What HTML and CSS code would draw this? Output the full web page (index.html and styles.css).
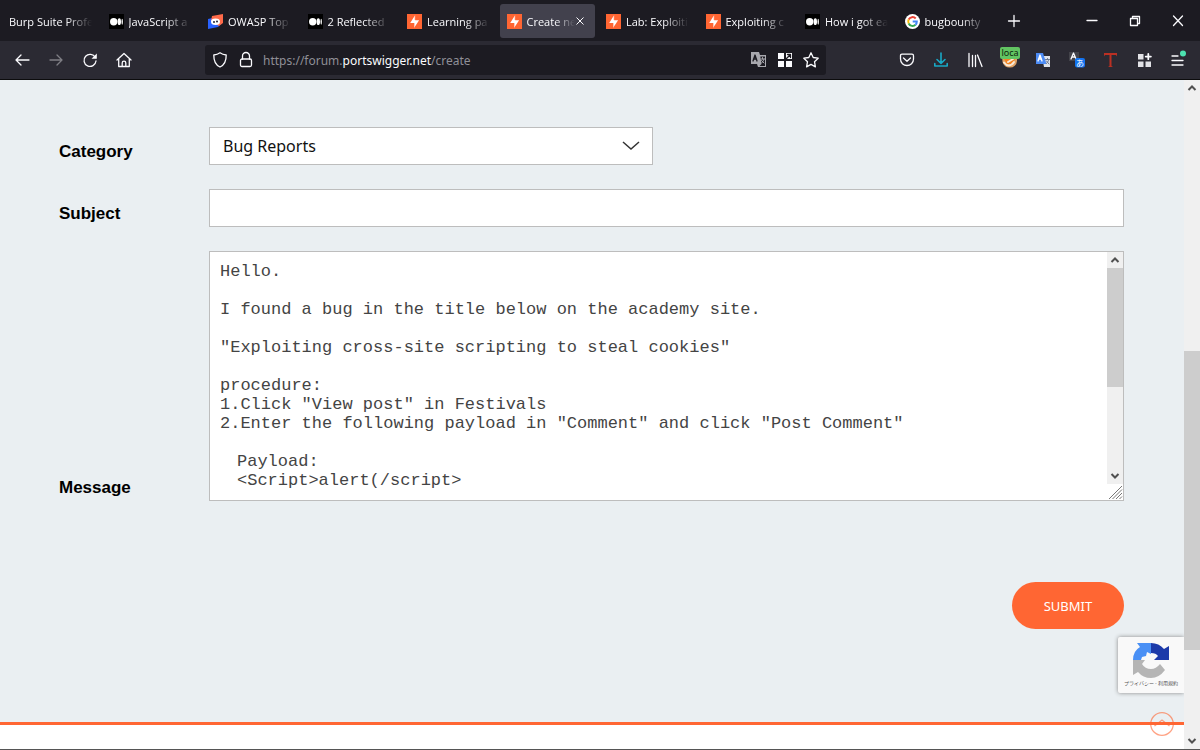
FILE: index.html
```html
<!DOCTYPE html>
<html lang="en">
<head>
<meta charset="utf-8">
<title>Create new post</title>
<link rel="stylesheet" href="styles.css">
</head>
<body>
<svg class="defs" aria-hidden="true">
  <symbol id="burp" viewBox="0 0 15 15"><path fill="#ff6633" d="M0 0h15v15H0z"/><path fill="#fff" d="M8.200 1v5.200h3.900L7 14V8.900H3.200z"/><path stroke="#ff6633" stroke-width=".7" d="M8.200 1v5M7 9v5"/></symbol>
  <symbol id="medium" viewBox="0 0 15 15"><path d="M0 0h15v15H0z"/><circle cx="4.700" cy="7.700" r="3.700" fill="#fff"/><ellipse cx="10.300" cy="7.700" rx="1.700" ry="3.400" fill="#fff"/><ellipse cx="13.200" cy="7.700" rx=".7" ry="3" fill="#fff"/></symbol>
  <symbol id="up" viewBox="0 0 16 16"><path fill="none" stroke="#505050" stroke-width="2" d="M4.500 10 8 6.500 11.500 10"/></symbol>
  <symbol id="down" viewBox="0 0 16 16"><path fill="none" stroke="#505050" stroke-width="2" d="M4.500 6 8 9.500 11.500 6"/></symbol>
</svg>

<header class="tabbar">
  <nav class="tabs">
    <button class="tab"><span class="tab-text">Burp Suite Profe</span></button>
    <button class="tab"><svg class="fav"><use href="#medium"/></svg><span class="tab-text">JavaScript a</span></button>
    <button class="tab"><svg class="fav" viewBox="0 0 15 15"><path fill="#2962ff" d="M0 5 9 3l4 7-3 3-10 2z"/><path fill="#ff6b4a" d="M4 2 15 0v9l-4 3-8-5z"/><ellipse cx="7.500" cy="7.800" rx="4.500" ry="3.300" fill="#fff"/><circle cx="6" cy="8" r="1" fill="#223"/><circle cx="9" cy="7.500" r="1" fill="#223"/></svg><span class="tab-text">OWASP Top</span></button>
    <button class="tab"><svg class="fav"><use href="#medium"/></svg><span class="tab-text">2 Reflected</span></button>
    <button class="tab"><svg class="fav"><use href="#burp"/></svg><span class="tab-text">Learning pa</span></button>
    <button class="tab active"><svg class="fav"><use href="#burp"/></svg><span class="tab-text">Create ne</span><svg class="close" viewBox="0 0 8 8"><path d="m.5.5 7 7m0-7-7 7"/></svg></button>
    <button class="tab"><svg class="fav"><use href="#burp"/></svg><span class="tab-text">Lab: Exploiti</span></button>
    <button class="tab"><svg class="fav"><use href="#burp"/></svg><span class="tab-text">Exploiting c</span></button>
    <button class="tab"><svg class="fav"><use href="#medium"/></svg><span class="tab-text">How i got ea</span></button>
    <button class="tab"><svg class="fav" viewBox="0 0 15 15"><circle cx="7.500" cy="7.500" r="7.500" fill="#fff"/><g fill="none" stroke-width="2"><path stroke="#ea4335" d="M3.700 5.500A4.300 4.300 0 0 1 10.700 4.500"/><path stroke="#fbbc05" d="M3.700 5.500a4.300 4.300 0 0 0 0 4"/><path stroke="#34a853" d="M3.700 9.500a4.300 4.300 0 0 0 6.800 1.300"/><path stroke="#4285f4" d="M10.500 10.800a4.300 4.300 0 0 0 1.300-3.200H7.700"/></g></svg><span class="tab-text">bugbounty</span></button>
  </nav>
  <button class="ib new" aria-label="New tab"><svg viewBox="0 0 18 18"><path d="M9 3.500v11M3.500 9h11"/></svg></button>
  <div class="window">
    <button class="ib" aria-label="Minimize"><svg viewBox="0 0 18 18"><path d="M4 8.500h10"/></svg></button>
    <button class="ib" aria-label="Restore"><svg viewBox="0 0 18 18"><path d="M4.500 6.500h7v7h-7zM6.500 6V4.500h7v7H12"/></svg></button>
    <button class="ib" aria-label="Close"><svg viewBox="0 0 18 18"><path d="m4.500 4 9 9.500m0-9.500-9 9.500"/></svg></button>
  </div>
</header>

<div class="toolbar">
  <div class="group">
    <button class="ib" aria-label="Back"><svg viewBox="0 0 18 18"><path d="M16 9H3m5-5L3 9l5 5"/></svg></button>
    <button class="ib dim" aria-label="Forward"><svg viewBox="0 0 18 18"><path d="M3 9h12m-5-5 5 5-5 5"/></svg></button>
    <button class="ib" aria-label="Reload"><svg viewBox="0 0 18 18"><path d="M14.300 6.500A6 6 0 1 0 15 10"/><path fill="#fbfbfe" stroke="none" d="M15.800 2.500v5.300h-5.300z"/></svg></button>
    <button class="ib" aria-label="Home"><svg viewBox="0 0 18 18"><path d="m2 9 7-6.500L16 9M3.700 8v7.500h10.600V8M7.200 15v-3a1.800 1.800 0 0 1 3.600 0v3"/></svg></button>
  </div>
  <div class="urlbar">
    <svg class="i" viewBox="0 0 18 18"><path d="M9 1.800c2 1.500 4 2 6.200 2.200C15.300 9.500 13.500 14 9 16 4.500 14 2.700 9.500 2.800 4 5 3.800 7 3.300 9 1.800z"/></svg>
    <svg class="i" viewBox="0 0 18 18"><rect x="3.500" y="8" width="11" height="7.500" rx="1.500"/><path d="M5.500 8V5a3.500 3.500 0 0 1 7 0v3"/></svg>
    <div class="url">https://forum.<b>portswigger.net</b>/create</div>
    <svg class="i" viewBox="0 0 18 18"><path fill="#a8a8ae" stroke="none" d="M1 1h8l1 3h6v12H8l-1-3H1z"/><path fill="#1c1b22" stroke="none" d="M10.300 5.500h4.700V15H9.500l2-2z"/><path stroke="#1c1b22" d="m3 10 2-6 2 6M3.500 8h3"/><path stroke="#a8a8ae" stroke-width="1" d="M11 8h3.500m-2-1.500V8m1.500 0c-.5 2-1.500 3-2.500 4m0-2.500 2.500 2.500"/></svg>
    <svg class="i" viewBox="0 0 18 18"><path fill="#fbfbfe" stroke="none" d="M2 2h6v6H2zM2 10h6v6H2zM10 10h6v6h-6zM10 2h6v6h-6z"/><path stroke="#1c1b22" d="m10.500 7.500 4-4M11.500 3.500h3v3"/></svg>
    <svg class="i" viewBox="0 0 18 18"><path d="m9 1.800 2.200 4.700 5 .7-3.700 3.500.9 5.200L9 13.400l-4.400 2.500.9-5.200L1.800 7.200l5-.7z"/></svg>
  </div>
  <div class="group">
    <button class="ib" aria-label="Pocket"><svg viewBox="0 0 18 18"><path d="M4 3.200h10q1.500 0 1.500 1.500V8c0 4-3 6.500-6.500 6.500S2.500 12 2.500 8V4.700q0-1.500 1.500-1.500zM5.500 7 9 10.200 12.500 7"/></svg></button>
    <button class="ib teal" aria-label="Downloads"><svg viewBox="0 0 18 18"><path d="M9 2v10M5 8.500 9 12.300l4-3.800M2.800 12.500V15h12.400v-2.500"/></svg></button>
    <button class="ib" aria-label="Library"><svg viewBox="0 0 18 18"><path d="M3 2.500v13M6.500 4.500v11M9.500 4.500v11M11.500 4 16 15.500"/></svg></button>
    <button class="ib" aria-label="Proxy"><svg viewBox="0 0 18 18"><path fill="#e0a063" stroke="none" d="M2 4h15v6a7 7 0 0 1-7 6.500A7 7 0 0 1 2.500 11z"/><path fill="#f58220" stroke="none" d="M4 8h11l-3 5H7z"/><path stroke="#f8ead8" stroke-width="2" d="M4 11.500c3 4 7 4 10-.5M8 11l5-3"/></svg><span class="badge">loca</span></button>
    <button class="ib" aria-label="Google Translate"><svg viewBox="0 0 18 18"><path fill="#dfe3ea" stroke="none" d="M8 5h8v11h-6z"/><path fill="#4c8bf5" stroke="none" d="M2 2h7l3.500 11H2z"/><path stroke="#fff" stroke-width="1.300" d="m4 10 2-6 2 6M4.500 8h3"/><path stroke="#6b7890" stroke-width="1" d="M11.500 8.500h4m-2-1v1m1.300 0c-.5 2-1.500 3-2.300 4m0-2.500 2.500 3"/></svg></button>
    <button class="ib" aria-label="Page translator"><svg viewBox="0 0 18 18"><path fill="#43434a" stroke="none" d="M1 1h10v9H1z"/><path d="m3 8 2.500-6L8 8M4 6h3"/><rect x="7" y="7" width="10" height="9.500" rx="2" fill="#1373f0" stroke="none"/><text class="kana" x="8" y="15">あ</text></svg></button>
    <button class="ib" aria-label="Text tool"><svg viewBox="0 0 18 18"><path fill="#bb3023" stroke="none" d="M2 2h13v3.500l-1-1.500H9.500v11l1.500 1H6l1.500-1V4H3L2 5.500z"/></svg></button>
    <button class="ib" aria-label="Extensions"><svg viewBox="0 0 18 18"><path fill="#e2e2e6" stroke="none" d="M2 3h5.500v5.500H2zM2 10.500h5.500V16H2zM9.500 10.500H15V16H9.500z"/><path stroke-width="1.800" d="M12.300 3v5.200M9.700 5.600h5.200"/></svg></button>
    <button class="ib" aria-label="Menu"><svg viewBox="0 0 18 18"><path d="M2 5h6M2 9.500h11M2 14h11"/><circle cx="13" cy="2.500" r="3" fill="#4de2b0" stroke="none"/></svg></button>
  </div>
</div>

<div class="view">
  <main class="page">
    <form class="form">
      <label class="label" for="category">Category</label>
      <div class="selectbox"><select class="field" id="category"><option>Bug Reports</option></select><svg class="arrow" viewBox="0 0 18 10"><path d="m1 1 8 7 8-7"/></svg></div>
      <label class="label" for="subject">Subject</label>
      <input class="field" id="subject" type="text">
      <label class="label" for="message">Message</label>
      <div class="messagebox">
        <textarea class="message" id="message" spellcheck="false">Hello.

I found a bug in the title below on the academy site.

"Exploiting cross-site scripting to steal cookies"

procedure:
1.Click "View post" in Festivals
2.Enter the following payload in "Comment" and click "Post Comment"

&#12288;Payload:
&#12288;&lt;Script&gt;alert(/script&gt;</textarea>
        <div class="scroll inner"><svg class="sa"><use href="#up"/></svg><div class="thumb"></div><div class="rest"></div><svg class="sa"><use href="#down"/></svg><svg class="grip" viewBox="0 0 16 16"><path d="M2 15 15 2M5.500 15 15 5.500M9 15l6-6M12.500 15l2.500-2.500"/></svg></div>
      </div>
      <button class="submit" type="button">SUBMIT</button>
    </form>
    <div class="footer"></div>
    <div class="captcha">
      <svg class="logo" viewBox="0 0 36 36"><path fill="#4a90f5" d="M4 1h14v11l-4-2-1 4-4 1-1 3H0Q0 9 7 5z"/><path fill="#1c3aa9" d="M18 1q8 0 13 6l5-3v14H21l4-4q-2-3-7-3z"/><path fill="#b5b5b5" d="M0 18h12l-3 4q3 5 9 5 5 0 9-5l5 6q-6 8-14 8-8 0-13-6l-5 3z"/></svg>
      <span class="terms">プライバシー - 利用規約</span>
    </div>
    <button class="totop" type="button" aria-label="Back to top"><svg viewBox="0 0 24 24"><circle cx="12" cy="12" r="11.300"/><path d="m4.500 14 7.500-6 7.500 6"/></svg></button>
  </main>
  <div class="scroll outer"><svg class="sa"><use href="#up"/></svg><div class="before"></div><div class="thumb"></div><div class="rest"></div><svg class="sa"><use href="#down"/></svg></div>
</div>
</body>
</html>
```
FILE: styles.css
```css
* { box-sizing: border-box; }
body { margin: 0; height: 100vh; display: flex; flex-direction: column; overflow: hidden; background: #1c1b22; font-family: "Noto Sans", sans-serif; border-bottom: 1px solid #555; }
button { border: 0; margin: 0; padding: 0; background: none; font: inherit; color: inherit; }
.defs { display: none; }

.tabbar { height: 41px; flex: none; display: flex; align-items: center; color: #fbfbfe; }
.tabs { flex: 1; min-width: 0; display: flex; align-self: stretch; }
.tab { flex: 1 1 0; min-width: 0; display: flex; align-items: center; gap: 5px; margin: 4px 2px 3px; padding: 0 4px 0 7px; border-radius: 3px; font-family: "Open Sans", sans-serif; font-size: 11px; text-align: left; }
.tab.active { background: #42414d; }
.fav { width: 15px; height: 15px; flex: none; }
.tab-text { flex: 1; min-width: 0; overflow: hidden; white-space: nowrap; mask-image: linear-gradient(to left, transparent 2px, #000 28px); }
.active .tab-text { mask-image: linear-gradient(to left, transparent, #000 20px); }
.close { width: 8px; height: 8px; flex: none; stroke: #fbfbfe; margin: 0 7px 0 -4px; }
.ib { position: relative; width: 18px; height: 18px; flex: none; }
.ib svg, .i { display: block; width: 18px; height: 18px; fill: none; stroke: #fbfbfe; stroke-width: 1.3; stroke-linejoin: round; stroke-linecap: round; overflow: visible; }
.i { flex: none; }
.new { margin-left: 10px; }
.window { display: flex; gap: 25px; margin: 0 13px 0 60px; }

.toolbar { height: 39px; flex: none; display: flex; align-items: center; gap: 72px; padding: 0 12px 0 13px; background: #2b2a33; border-bottom: 1px solid #0c0c0d; }
.group { display: flex; gap: 16px; }
.dim { opacity: .4; }
.ib.teal svg { stroke: #19a9c6; stroke-width: 1.6; }
.badge { position: absolute; left: 0; top: -4px; width: 20px; height: 12px; background: #62c462; color: #0d260d; font-size: 9px; line-height: 12px; text-align: center; border-radius: 2px; }
.kana { font: 8px "Noto Sans CJK JP", sans-serif; fill: #fff; stroke: none; }
.urlbar { flex: 1; min-width: 0; height: 30px; display: flex; align-items: center; gap: 8px; padding: 0 6px; border-radius: 3px; background: #1c1b22; }
.url { flex: 1; min-width: 0; color: #8f8f97; font-size: 12px; white-space: nowrap; overflow: hidden; }
.url b { font-weight: 400; color: #fbfbfe; }

.view { flex: 1; min-height: 0; display: flex; }
.page { position: relative; flex: 1; min-width: 0; display: flex; flex-direction: column; overflow: hidden; background: #eaeff2; }
.form { flex: 1; display: grid; grid-template-columns: 150px 1fr; grid-template-rows: auto auto auto auto; align-content: start; align-items: end; row-gap: 24px; padding: 47px 60px 0 59px; }
.label { font: bold 17px/20px "Liberation Sans", Arial, sans-serif; color: #000; padding-bottom: 3px; }
.field { display: block; width: 100%; height: 38px; margin: 0; padding: 0 13px; border: 1px solid #bdbdbd; border-radius: 0; background: #fff; color: #111; font: 16px "Noto Sans", sans-serif; appearance: none; }
.selectbox { position: relative; width: 444px; max-width: 100%; }
.arrow { position: absolute; right: 13px; top: 14px; width: 18px; height: 10px; fill: none; stroke: #333; stroke-width: 1.5; pointer-events: none; }
.messagebox { display: flex; height: 250px; border: 1px solid #bdbdbd; background: #fff; }
.message { flex: 1; min-width: 0; margin: 0; padding: 10px; border: 0; resize: none; overflow: hidden; background: #fff; color: #444; font: 17px/19px "Liberation Mono", "Noto Sans CJK JP", monospace; }
.scroll { width: 16px; flex: none; display: flex; flex-direction: column; background: #f0f0f0; }
.sa { width: 16px; height: 16px; flex: none; }
.thumb { background: #cdcdcd; }
.inner .thumb { flex: 119; }
.inner .rest { flex: 81; }
.grip { width: 16px; height: 16px; flex: none; background: #fff; fill: none; stroke: #777; }
.outer .before { flex: 255; }
.outer .thumb { flex: 299; }
.outer .rest { flex: 83; }
.submit { grid-column: 2; justify-self: end; width: 112px; height: 47px; margin-top: 57px; border-radius: 24px; background: #ff6633; color: #fff; font-size: 13px; }
.footer { height: 27px; flex: none; border-top: 3px solid #ff6633; background: #fff; }
.captcha { position: absolute; right: 0; bottom: 56px; width: 66px; height: 56px; padding-top: 5px; display: flex; flex-direction: column; align-items: center; background: #f9f9f9; border-radius: 2px 0 0 2px; box-shadow: 0 0 4px #888; }
.logo { width: 36px; height: 36px; flex: none; }
.terms { font: 5px/10px "Noto Sans CJK JP", sans-serif; color: #555; white-space: nowrap; }
.totop { position: absolute; right: 10px; bottom: 13px; width: 24px; height: 24px; opacity: .6; }
.totop svg { display: block; width: 24px; height: 24px; fill: none; stroke: #ff6633; stroke-width: 1.3; }
```
